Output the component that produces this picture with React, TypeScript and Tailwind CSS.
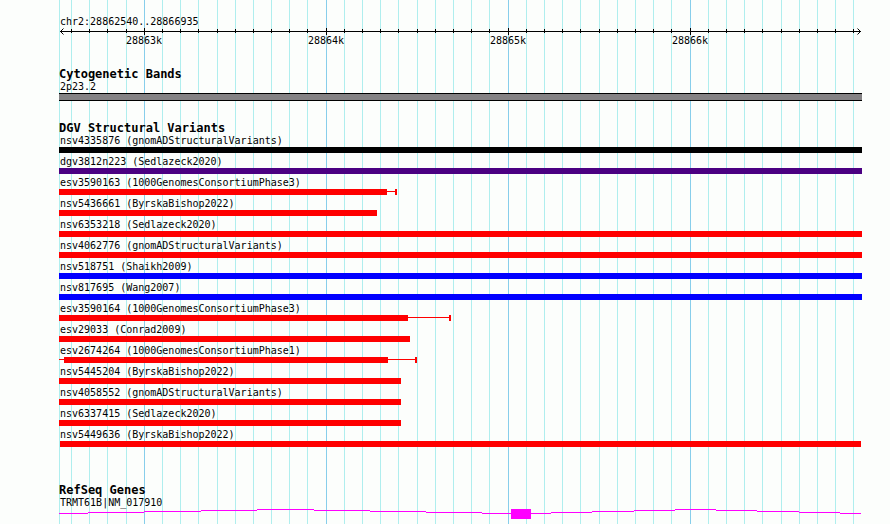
import clsx from 'clsx';

interface Variant {
  name: string;
  color: string;
  start: number;
  end: number;
  leader?: number;
  whisker?: number;
}

// Plot units, measured from the left edge of the region
const PLOT_WIDTH = 803;

const majorTicks = [
  { x: 85, label: '28863k' },
  { x: 267, label: '28864k' },
  { x: 449, label: '28865k' },
  { x: 631, label: '28866k' },
];

const minorTicks = [
  12, 30, 48, 67, 103, 121, 139, 158, 176, 194, 212, 230, 248, 285, 303, 321, 339, 358, 376, 394,
  412, 430, 467, 485, 503, 521, 540, 558, 576, 594, 612, 649, 667, 685, 703, 722, 740, 758, 776, 794,
];

const variants: Variant[] = [
  { name: 'nsv4335876 (gnomADStructuralVariants)', color: 'fill-black', start: 0, end: 803 },
  { name: 'dgv3812n223 (Sedlazeck2020)', color: 'fill-[#4b0082]', start: 0, end: 803 },
  { name: 'esv3590163 (1000GenomesConsortiumPhase3)', color: 'fill-[#ff0000]', start: 0, end: 328, whisker: 338 },
  { name: 'nsv5436661 (ByrskaBishop2022)', color: 'fill-[#ff0000]', start: 0, end: 318 },
  { name: 'nsv6353218 (Sedlazeck2020)', color: 'fill-[#ff0000]', start: 0, end: 803 },
  { name: 'nsv4062776 (gnomADStructuralVariants)', color: 'fill-[#ff0000]', start: 0, end: 803 },
  { name: 'nsv518751 (Shaikh2009)', color: 'fill-[#0000ff]', start: 0, end: 803 },
  { name: 'nsv817695 (Wang2007)', color: 'fill-[#0000ff]', start: 0, end: 803 },
  { name: 'esv3590164 (1000GenomesConsortiumPhase3)', color: 'fill-[#ff0000]', start: 0, end: 349, whisker: 392 },
  { name: 'esv29033 (Conrad2009)', color: 'fill-[#ff0000]', start: 0, end: 351 },
  { name: 'esv2674264 (1000GenomesConsortiumPhase1)', color: 'fill-[#ff0000]', start: 5, end: 329, leader: 0, whisker: 358 },
  { name: 'nsv5445204 (ByrskaBishop2022)', color: 'fill-[#ff0000]', start: 0, end: 342 },
  { name: 'nsv4058552 (gnomADStructuralVariants)', color: 'fill-[#ff0000]', start: 0, end: 342 },
  { name: 'nsv6337415 (Sedlazeck2020)', color: 'fill-[#ff0000]', start: 0, end: 342 },
  { name: 'nsv5449636 (ByrskaBishop2022)', color: 'fill-[#ff0000]', start: 1, end: 802 },
];

// Intron line of the transcript: [start, end, y]
const intronSteps = [
  [0, 29, 4], [29, 85, 3], [85, 142, 2], [142, 198, 1], [198, 255, 0],
  [255, 311, 1], [311, 367, 2], [367, 423, 3], [423, 452, 4],
  [472, 492, 4], [492, 533, 3], [533, 575, 2], [575, 616, 1], [616, 657, 0],
  [657, 698, 1], [698, 740, 2], [740, 781, 3], [781, 802, 4],
];

const pct = (value: number) => `${(value / PLOT_WIDTH) * 100}%`;

function GridLines() {
  return (
    <svg className="absolute inset-0 h-full w-full" shapeRendering="crispEdges" aria-hidden="true">
      {[0, ...minorTicks].map((x) => (
        <rect key={x} x={pct(x)} width="1" height="100%" className="fill-[#afeeee]" />
      ))}
      {majorTicks.map(({ x }) => (
        <rect key={x} x={pct(x)} width="1" height="100%" className="fill-[#87ceeb]" />
      ))}
    </svg>
  );
}

function Ruler() {
  return (
    <svg className="block h-5 w-full overflow-visible">
      <g shapeRendering="crispEdges">
        <rect x={pct(1)} y="3" width={pct(801)} height="1" />
        {minorTicks.map((x) => (
          <rect key={x} x={pct(x)} y="1" width="1" height="4" />
        ))}
        {majorTicks.map(({ x }) => (
          <rect key={x} x={pct(x)} y="0" width="1" height="7" />
        ))}
      </g>
      <svg x={pct(1)} className="overflow-visible">
        <path d="M3.5 0.5 L0.5 3.5 L3.5 6.5" fill="none" stroke="black" />
      </svg>
      <svg x={pct(802)} className="overflow-visible">
        <path d="M-3.5 0.5 L-0.5 3.5 L-3.5 6.5" fill="none" stroke="black" />
      </svg>
      {majorTicks.map(({ x, label }) => (
        <text key={label} x={pct(x)} y="16" textAnchor="middle">
          {label}
        </text>
      ))}
    </svg>
  );
}

function TrackTitle({ children }: { children: string }) {
  return <h2 className="text-[12px] leading-[14px] font-bold whitespace-nowrap">{children}</h2>;
}

function FeatureLabel({ children }: { children: string }) {
  return <p className="pl-px leading-3 whitespace-nowrap">{children}</p>;
}

function VariantRow({ variant }: { variant: Variant }) {
  const { name, color, start, end, leader, whisker } = variant;

  return (
    <li>
      <FeatureLabel>{name}</FeatureLabel>
      <svg className={clsx('block h-1.5 w-full', color)} shapeRendering="crispEdges" aria-hidden="true">
        {leader !== undefined && (
          <rect x={pct(leader)} y="2" width={pct(start - leader)} height="1" />
        )}
        <rect x={pct(start)} width={pct(end - start)} height="6" />
        {whisker !== undefined && (
          <>
            <rect x={pct(end)} y="2" width={pct(whisker - end)} height="1" />
            <rect x={pct(whisker - 2)} width="2" height="6" />
          </>
        )}
      </svg>
    </li>
  );
}

export default function App() {
  return (
    <main className="min-h-screen overflow-hidden bg-[#fcfefc] pr-7 pl-[59px] font-['DejaVu_Sans_Mono',monospace] text-[10px] text-black">
      <div className="relative min-h-screen">
        <GridLines />
        <div className="relative pt-4">
          <header className="mb-[19px]">
            <h1 className="pl-px leading-3">chr2:28862540..28866935</h1>
            <Ruler />
          </header>

          <section className="mb-5">
            <TrackTitle>Cytogenetic Bands</TrackTitle>
            <FeatureLabel>2p23.2</FeatureLabel>
            <div className="h-2 border-y border-black bg-[#848284]" />
          </section>

          <section className="mb-9">
            <TrackTitle>DGV Structural Variants</TrackTitle>
            <ul className="flex flex-col gap-[3px]">
              {variants.map((variant) => (
                <VariantRow key={variant.name} variant={variant} />
              ))}
            </ul>
          </section>

          <section>
            <TrackTitle>RefSeq Genes</TrackTitle>
            <FeatureLabel>TRMT61B|NM_017910</FeatureLabel>
            <svg className="block h-[15px] w-full fill-[#ff00ff]" shapeRendering="crispEdges" aria-hidden="true">
              {intronSteps.map(([start, end, y]) => (
                <rect key={start} x={pct(start)} y={y} width={pct(end - start)} height="1" />
              ))}
              <rect x={pct(452)} width={pct(20)} height="10" />
            </svg>
          </section>
        </div>
      </div>
    </main>
  );
}
